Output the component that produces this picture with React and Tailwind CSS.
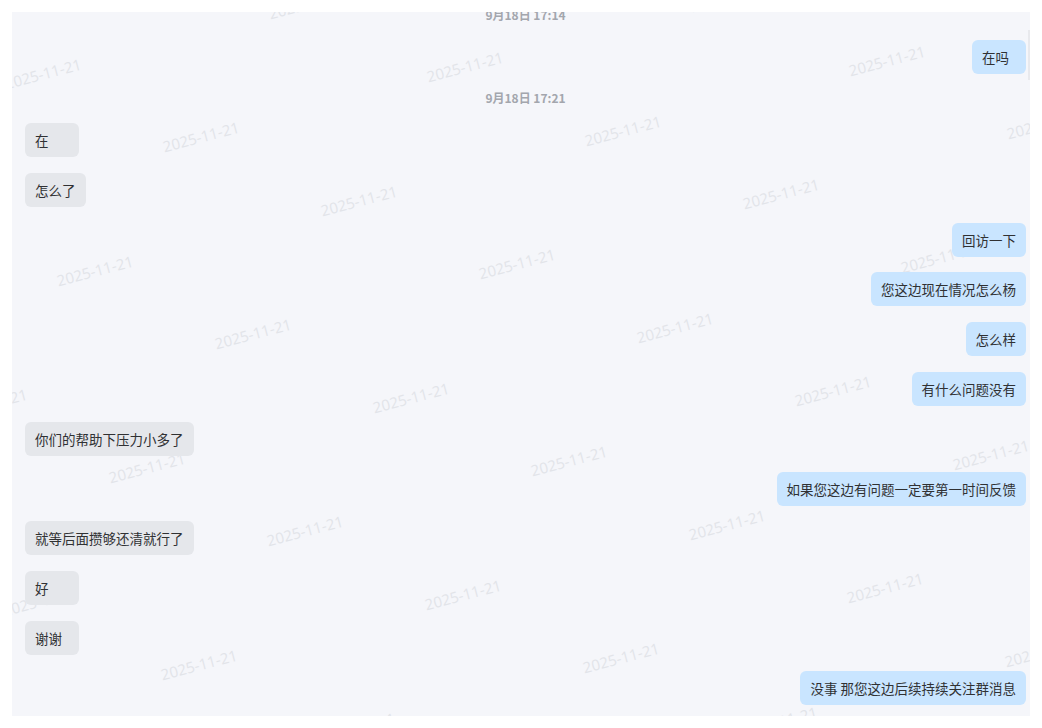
const messages = [
  { type: 'time', text: '9月18日 17:14' },
  { type: 'me', text: '在吗' },
  { type: 'time', text: '9月18日 17:21' },
  { type: 'them', text: '在' },
  { type: 'them', text: '怎么了' },
  { type: 'me', text: '回访一下' },
  { type: 'me', text: '您这边现在情况怎么杨' },
  { type: 'me', text: '怎么样' },
  { type: 'me', text: '有什么问题没有' },
  { type: 'them', text: '你们的帮助下压力小多了' },
  { type: 'me', text: '如果您这边有问题一定要第一时间反馈' },
  { type: 'them', text: '就等后面攒够还清就行了' },
  { type: 'them', text: '好' },
  { type: 'them', text: '谢谢' },
  { type: 'me', text: '没事 那您这边后续持续关注群消息' },
];

// watermark lattice, page coords of text centres
function watermarkSpots() {
  const spots = [];
  for (let j = -2; j <= 13; j++) {
    for (let i = -6; i <= 6; i++) {
      const x = 465 + i * 422 + j * 158;
      const y = 67 - i * 6.5 + j * 63.5;
      if (x > -80 && x < 1120 && y > -40 && y < 760) spots.push({ x: x - 12, y: y - 12 });
    }
  }
  return spots;
}

function Watermark() {
  return (
    <div className="absolute inset-0 pointer-events-none select-none">
      {watermarkSpots().map((p, k) => (
        <span
          key={k}
          className="absolute -translate-x-1/2 -translate-y-1/2 -rotate-[15deg] whitespace-nowrap text-[15px] leading-none text-[#e2e4e9] font-['Open_Sans',sans-serif]"
          style={{ left: p.x, top: p.y }}
        >
          2025-11-21
        </span>
      ))}
    </div>
  );
}

function Bubble({ mine, text }) {
  return (
    <div className={`flex ${mine ? 'justify-end' : 'justify-start'}`}>
      <div
        className={`min-w-[54px] rounded-md px-[10px] py-2 text-[13.5px] leading-[18px] text-[#303133] ${
          mine ? 'bg-[#c9e5ff]' : 'bg-[#e5e7eb]'
        }`}
      >
        {text}
      </div>
    </div>
  );
}

export default function App() {
  return (
    <div className="min-h-screen bg-white p-3 font-['Noto_Sans_CJK_SC','Noto_Sans',sans-serif]">
      <div className="relative h-[704px] w-[1018px] overflow-hidden bg-[#f5f6fa]">
        <Watermark />
        <div className="absolute right-0 top-[18px] h-[50px] w-[2px] bg-[#e8e9ed]" />
        <div className="relative -mt-[6.3px] flex w-[1026px] flex-col gap-[15.8px] pl-[13px] pr-[12px]">
          {messages.map((m, k) =>
            m.type === 'time' ? (
              <div key={k} className="text-center text-[12px] font-semibold leading-[18px] text-[#a3a6ad]">
                {m.text}
              </div>
            ) : (
              <Bubble key={k} mine={m.type === 'me'} text={m.text} />
            )
          )}
        </div>
      </div>
    </div>
  );
}
